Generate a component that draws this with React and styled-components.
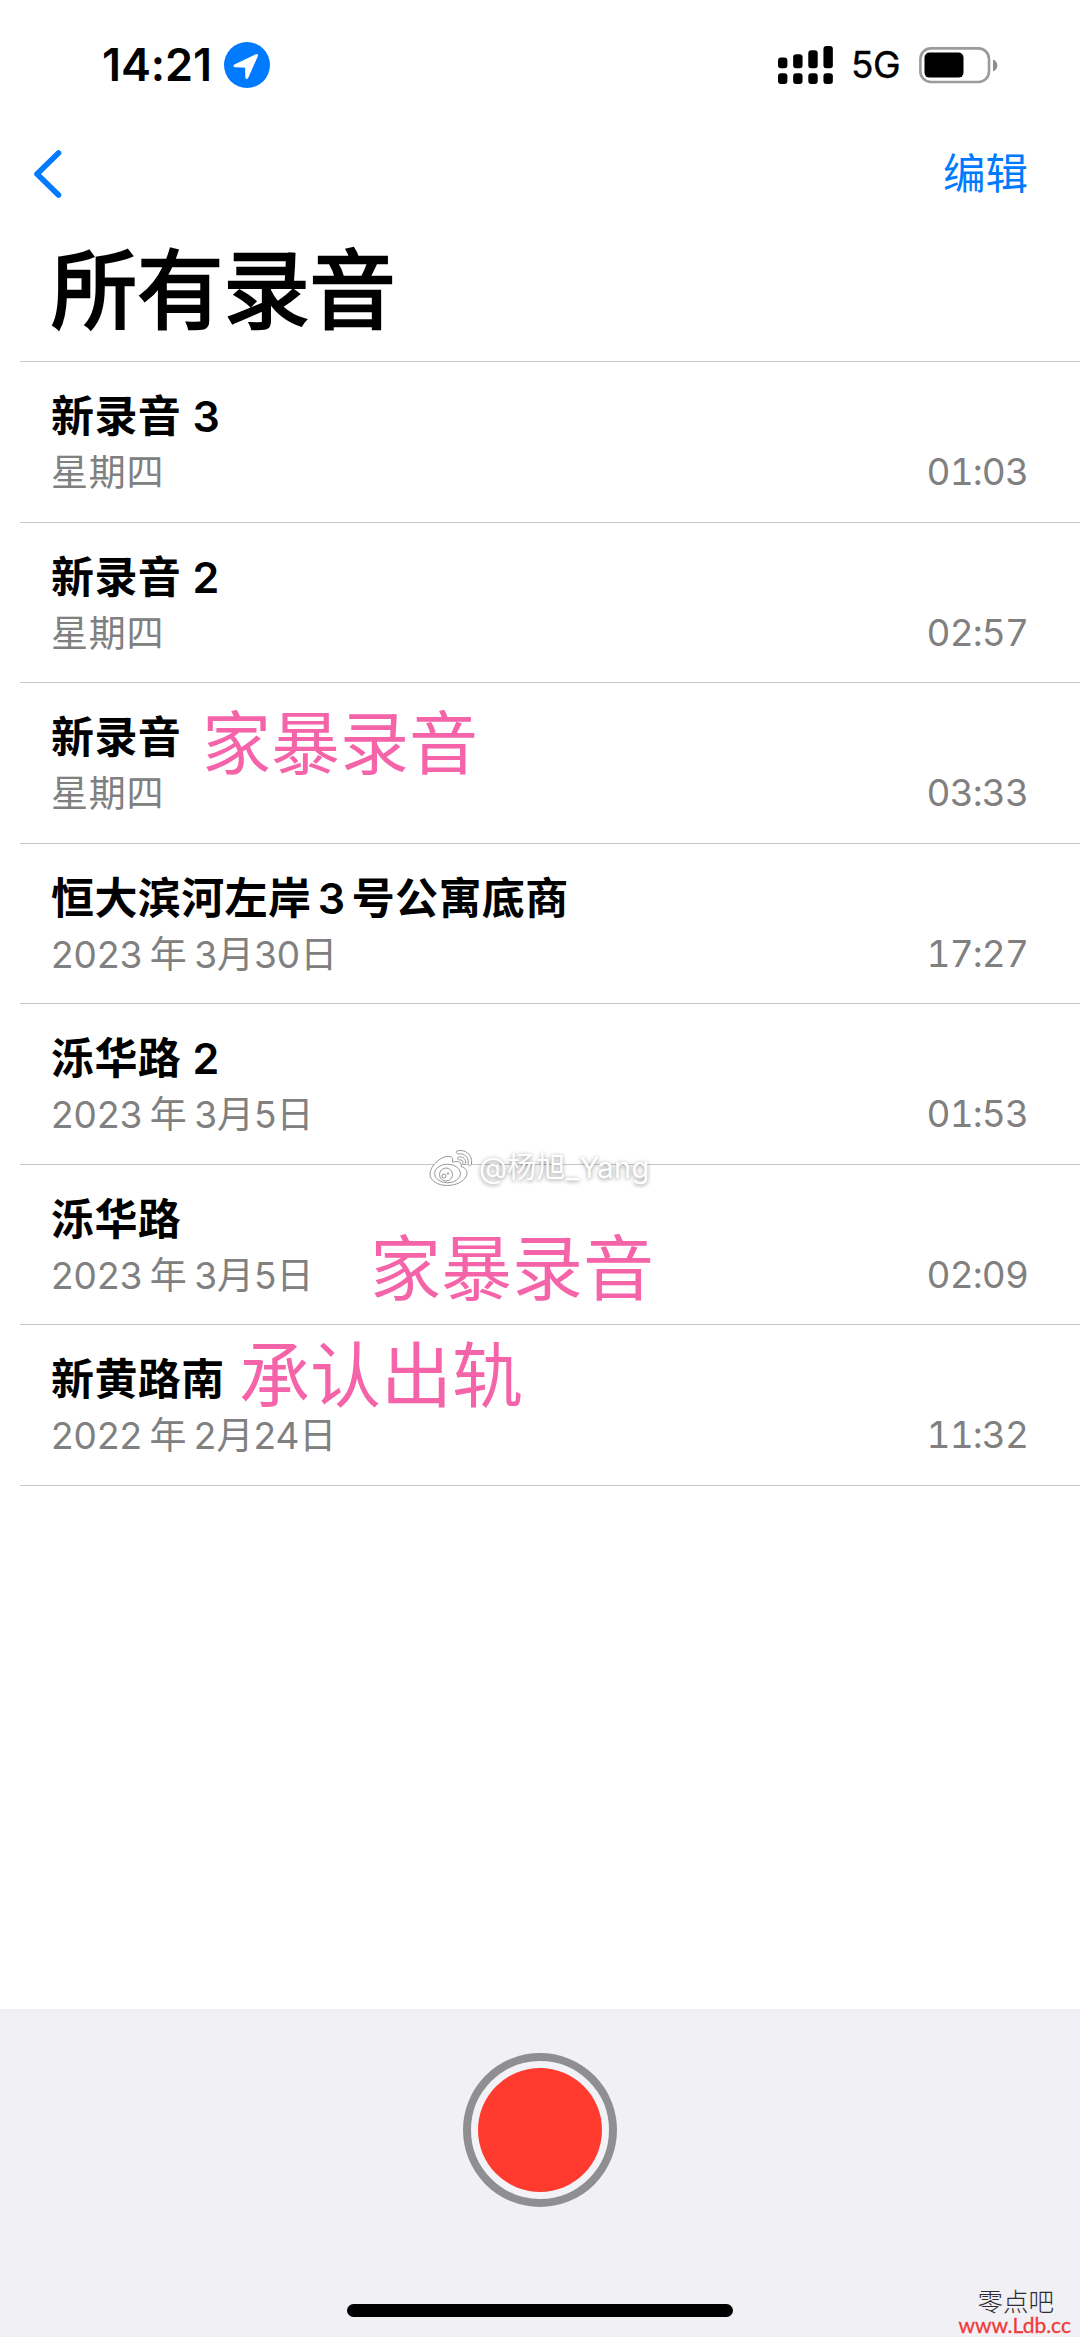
import React from "react";
import styled, { createGlobalStyle } from "styled-components";

const GlobalStyle = createGlobalStyle`
    * {
        box-sizing: border-box;
    }
    body {
        margin: 0;
        background: #ffffff;
    }
`;

const Container = styled.div`
    position: relative;
    display: flex;
    flex-direction: column;
    width: 1080px;
    height: 2337px;
    overflow: hidden;
    background: #ffffff;
    font-family: "Inter", "Noto Sans CJK SC", sans-serif;
    color: #000000;
    white-space: nowrap;
`;

const StatusBar = styled.div`
    display: flex;
    justify-content: space-between;
    align-items: center;
    height: 130px;
    padding: 0 82px 0 102px;
`;

const StatusGroup = styled.div`
    display: flex;
    align-items: center;
`;

const Clock = styled.span`
    width: 122px;
    font-size: 45px;
    font-weight: 600;
    line-height: 60px;
    letter-spacing: -0.1px;
`;

const Network = styled.span`
    width: 68px;
    margin-left: 18px;
    font-size: 37px;
    font-weight: 400;
    line-height: 50px;
    letter-spacing: -0.6px;
    -webkit-text-stroke: 0.4px #000000;
`;

const NavBar = styled.div`
    display: flex;
    justify-content: space-between;
    align-items: center;
    height: 88px;
    padding: 0 52px 0 32px;
`;

const EditBtn = styled.span`
    font-size: 42.5px;
    line-height: 60px;
    color: #007aff;
`;

const Title = styled.h1`
    height: 143px;
    margin: 0;
    padding: 2px 0 0 51px;
    font-size: 86px;
    font-weight: 400;
    line-height: 143px;
    letter-spacing: 0.2px;
    -webkit-text-stroke: 2.6px #000000;
`;

const List = styled.div`
    display: flex;
    flex-direction: column;
    margin-left: 20px;
    border-top: 1px solid #cbcbcc;
`;

const Row = styled.div`
    position: relative;
    display: flex;
    justify-content: space-between;
    height: 160.57px;
    padding: 26px 52px 0 31px;
    border-bottom: 1px solid #c8c8c9;
`;

const RowText = styled.div`
    display: flex;
    flex-direction: column;
`;

const Name = styled.span`
    height: 56px;
    font-size: 43px;
    font-weight: 600;
    line-height: 56px;
    letter-spacing: 0.4px;
    word-spacing: ${(props) => (props.$tight ? "-5px" : "0")};
`;

const Sub = styled.span`
    height: 56px;
    font-size: 37px;
    line-height: 57px;
    letter-spacing: ${(props) => (props.$date ? "0" : "0.8px")};
    word-spacing: -3px;
    color: #808080;
`;

const Duration = styled.span`
    margin-top: 56px;
    height: 56px;
    font-size: 37px;
    line-height: 56px;
    font-variant-numeric: tabular-nums;
    letter-spacing: -0.9px;
    color: #808080;
`;

const Note = styled.span`
    position: absolute;
    left: ${(props) => props.$x}px;
    top: ${(props) => props.$y}px;
    font-size: ${(props) => props.$size}px;
    line-height: 80px;
    color: #f564a9;
`;

const Footer = styled.div`
    display: flex;
    flex-direction: column;
    align-items: center;
    justify-content: space-between;
    height: 328px;
    margin-top: auto;
    padding: 44px 0 20px;
    background: #f1f0f5;
`;

const RecordBtn = styled.div`
    display: flex;
    align-items: center;
    justify-content: center;
    width: 154px;
    height: 154px;
    border: 8px solid #8f8f91;
    border-radius: 50%;
    background: #f3f3f7;
`;

const RecordDot = styled.div`
    width: 124px;
    height: 124px;
    border-radius: 50%;
    background: #ff3b30;
`;

const HomeBar = styled.div`
    width: 386px;
    height: 13px;
    border-radius: 7px;
    background: #000000;
`;

const Watermark = styled.div`
    position: absolute;
    left: 428px;
    top: 1147px;
    display: flex;
    align-items: center;
    font-size: 29px;
    line-height: 42px;
    letter-spacing: 0.3px;
    color: #ffffff;
    text-shadow: 0 1px 4px rgba(0, 0, 0, 0.45);
`;

const WatermarkName = styled.span`
    margin-left: 5px;
`;

const SiteMark = styled.div`
    position: absolute;
    right: 9px;
    bottom: 0;
    display: flex;
    flex-direction: column;
    align-items: flex-end;
`;

const SiteName = styled.span`
    margin-right: 17px;
    font-family: "KaiTi", "Noto Sans CJK SC", serif;
    font-size: 25.5px;
    font-weight: 300;
    line-height: 24px;
    color: #2d2d33;
`;

const SiteUrl = styled.span`
    font-family: "Comic Sans MS", "Lato", sans-serif;
    font-size: 21px;
    line-height: 25px;
    color: #f03a3a;
    -webkit-text-stroke: 0.3px #f03a3a;
`;

const recordings = [
    { name: "新录音 3", sub: "星期四", time: "01:03" },
    { name: "新录音 2", sub: "星期四", time: "02:57" },
    { name: "新录音", sub: "星期四", time: "03:33", note: { text: "家暴录音", x: 182, y: 21, size: 69 } },
    { name: "恒大滨河左岸 3 号公寓底商", sub: "2023 年 3月30日", time: "17:27", tight: true, date: true },
    { name: "泺华路 2", sub: "2023 年 3月5日", time: "01:53", date: true },
    { name: "泺华路", sub: "2023 年 3月5日", time: "02:09", date: true, note: { text: "家暴录音", x: 350, y: 63, size: 71 } },
    { name: "新黄路南", sub: "2022 年 2月24日", time: "11:32", date: true, note: { text: "承认出轨", x: 219, y: 10, size: 71 } },
];

function LocationIcon() {
    return (
        <svg width="46" height="46" viewBox="0 0 46 46">
            <circle cx="23" cy="23" r="23" fill="#007aff" />
            <path
                d="M32.5 13.5 L11 23.8 L22.6 24.2 L22.8 35.5 Z"
                fill="#fff"
                stroke="#fff"
                strokeWidth="3"
                strokeLinejoin="round"
            />
        </svg>
    );
}

function SignalIcon() {
    const tops = [11.6, 8.3, 4.3, 0];
    return (
        <svg width="55" height="38" viewBox="0 0 55 38">
            {tops.map((top, i) => (
                <g key={top}>
                    <rect x={i * 15.15} y={top} width="9.4" height={22.3 - top} rx="3" />
                    <rect x={i * 15.15} y="27.3" width="9.4" height="10.7" rx="3" />
                </g>
            ))}
        </svg>
    );
}

function BatteryIcon() {
    return (
        <svg width="79" height="37" viewBox="0 0 79 37">
            <rect x="1.4" y="1.4" width="68.6" height="33.6" rx="10.5" fill="none" stroke="#9b9b9b" strokeWidth="2.6" />
            <rect x="5.5" y="5.6" width="39" height="25" rx="5" />
            <path d="M74 12.5 C79.8 14.5 79.8 22.5 74 24.3 Z" fill="#8e8e8e" />
        </svg>
    );
}

function BackIcon() {
    return (
        <svg width="32" height="50" viewBox="0 0 32 50">
            <path
                d="M26.5 4 L5 25 L26.5 46"
                fill="none"
                stroke="#007aff"
                strokeWidth="5.6"
                strokeLinecap="round"
                strokeLinejoin="round"
            />
        </svg>
    );
}

function WeiboIcon() {
    return (
        <svg width="46" height="40" viewBox="0 0 46 40" fill="#fff" stroke="#8c8c8c" strokeWidth="0.9">
            <path d="M22 8.5 C15 6.5 2 17 2 26 C2 33 10 37.5 19.5 37.5 C30 37.5 39 31.5 39 25 C39 21 36 19.5 33 18.5 C34 15 32 12.5 24.5 14 C25 11 24.5 9 22 8.5 Z" />
            <ellipse cx="19.5" cy="25.5" rx="13" ry="9.3" />
            <circle cx="18" cy="26.5" r="6.5" />
            <circle cx="16" cy="28" r="2" />
            <circle cx="20" cy="25.5" r="0.8" />
            <path d="M29 3 C37 0.5 45 7 43.5 16 C43 18.5 40 18 40.2 15.5 C41 9 36 5 30.5 6 C28.5 6 27.5 4 29 3 Z" />
            <path d="M30.5 9 C35 8 38.5 11.5 37.5 15.5 C37 17.5 34.5 17 34.8 14.5 C35 12.5 33.5 11.5 31.5 12 C29.5 12 29 9.5 30.5 9 Z" />
        </svg>
    );
}

export default function App() {
    return (
        <Container>
            <GlobalStyle />
            <StatusBar>
                <StatusGroup>
                    <Clock>14:21</Clock>
                    <LocationIcon />
                </StatusGroup>
                <StatusGroup>
                    <SignalIcon />
                    <Network>5G</Network>
                    <BatteryIcon />
                </StatusGroup>
            </StatusBar>
            <NavBar>
                <BackIcon />
                <EditBtn>编辑</EditBtn>
            </NavBar>
            <Title>所有录音</Title>
            <List>
                {recordings.map((item, i) => (
                    <Row key={i}>
                        <RowText>
                            <Name $tight={item.tight}>{item.name}</Name>
                            <Sub $date={item.date}>{item.sub}</Sub>
                        </RowText>
                        <Duration>{item.time}</Duration>
                        {item.note && (
                            <Note $x={item.note.x} $y={item.note.y} $size={item.note.size}>
                                {item.note.text}
                            </Note>
                        )}
                    </Row>
                ))}
            </List>
            <Footer>
                <RecordBtn>
                    <RecordDot />
                </RecordBtn>
                <HomeBar />
            </Footer>
            <Watermark>
                <WeiboIcon />
                <WatermarkName>@杨旭_Yang</WatermarkName>
            </Watermark>
            <SiteMark>
                <SiteName>零点吧</SiteName>
                <SiteUrl>www.Ldb.cc</SiteUrl>
            </SiteMark>
        </Container>
    );
}
